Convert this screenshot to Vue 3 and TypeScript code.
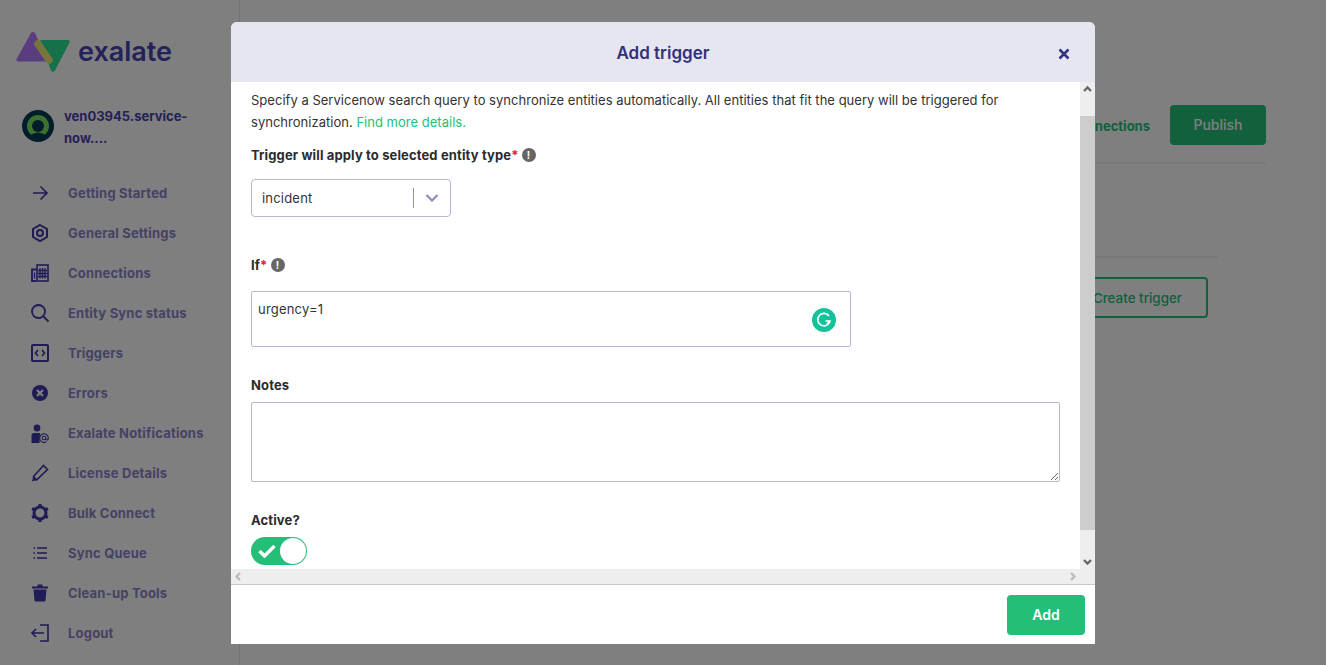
<script setup lang="ts">
interface NavItem { label: string; icon: string }
const nav: NavItem[] = [
  { label: 'Getting Started', icon: 'arrow' },
  { label: 'General Settings', icon: 'hex' },
  { label: 'Connections', icon: 'building' },
  { label: 'Entity Sync status', icon: 'search' },
  { label: 'Triggers', icon: 'code' },
  { label: 'Errors', icon: 'error' },
  { label: 'Exalate Notifications', icon: 'user' },
  { label: 'License Details', icon: 'pencil' },
  { label: 'Bulk Connect', icon: 'gear' },
  { label: 'Sync Queue', icon: 'list' },
  { label: 'Clean-up Tools', icon: 'trash' },
  { label: 'Logout', icon: 'logout' },
]
</script>

<template>
  <div class="page">
    <aside class="sidebar">
      <div class="brand">
        <svg width="56" height="42" viewBox="0 0 56 42">
          <path d="M15 2 Q17 0 19 2 L32 30.500 L2 30.500 Q-0.500 30 0.800 27.500 Z" fill="#b47aff" />
          <path d="M24 9 L52 9 Q54.500 9.500 53.500 11.500 L39 39.500 Q37 42 35 39.500 Z" fill="#28e294" />
          <line x1="22" y1="13" x2="33" y2="29" stroke="#f0ea78" stroke-width="7.500" stroke-linecap="round" />
        </svg>
        <span class="brand-name">exalate</span>
      </div>
      <div class="account">
        <svg class="avatar" width="32" height="32" viewBox="0 0 32 32">
          <circle cx="16" cy="16" r="16" fill="#053a55" />
          <circle cx="16" cy="16" r="11" fill="#7ce060" />
          <circle cx="16" cy="16" r="6" fill="#053a55" />
          <path d="M7 26 Q16 19 25 26 Q16 31 7 26 Z" fill="#053a55" />
        </svg>
        <span class="account-name">ven03945.service-now....</span>
      </div>
      <nav class="nav">
        <div v-for="item in nav" :key="item.label" class="nav-row">
          <span class="nav-icon">
            <svg width="20" height="20" viewBox="0 0 20 20" fill="none" stroke="#3e36aa" stroke-width="1.600">
              <path v-if="item.icon === 'arrow'" d="M3 10 H17 M10.500 3.500 L17 10 L10.500 16.500" />
              <g v-else-if="item.icon === 'hex'" stroke-width="2">
                <path d="M10 2 L17 6 V14 L10 18 L3 14 V6 Z" />
                <circle cx="10" cy="10" r="3" />
              </g>
              <g v-else-if="item.icon === 'building'">
                <rect x="7" y="2" width="11" height="16" />
                <path d="M6 6.500 H2 V18 H6" stroke-width="1.800" />
                <path d="M10 5 V15.500 M12.500 5 V15.500 M15 5 V15.500 M8 7.500 H17 M8 10.500 H17 M8 13.500 H17 M4.500 9.500 V15.500" stroke-width="1.300" />
              </g>
              <g v-else-if="item.icon === 'search'" stroke-width="1.800">
                <circle cx="8.500" cy="8.500" r="6.500" />
                <path d="M13.500 13.500 L18.500 18.500" />
              </g>
              <g v-else-if="item.icon === 'code'">
                <rect x="2" y="2" width="16" height="16" rx="1" stroke-width="2" />
                <path d="M8 7 L5.500 10 L8 13 M12 7 L14.500 10 L12 13" stroke-width="1.700" />
              </g>
              <g v-else-if="item.icon === 'error'">
                <circle cx="10" cy="10" r="8" fill="#3e36aa" stroke="none" />
                <path d="M7 7 L13 13 M13 7 L7 13" stroke="#fff" stroke-width="2.200" />
              </g>
              <g v-else-if="item.icon === 'user'">
                <circle cx="7" cy="5" r="3.400" fill="#3e36aa" stroke="none" />
                <path d="M1.500 20 V12.500 Q1.500 10 4 10 H10 L9.500 20 Z" fill="#3e36aa" stroke="none" />
                <path d="M15.800 15 V16 Q16 17.200 17.200 17 Q18.500 16.500 18.300 15 A4.300 4.300 0 1 0 16.500 18.600" stroke-width="1.100" />
                <circle cx="14" cy="15" r="1.800" stroke-width="1.100" />
              </g>
              <g v-else-if="item.icon === 'pencil'">
                <path d="M3.500 13.500 L13.500 2.500 L17.500 6.500 L6.500 17 Z" />
                <path d="M2 18.500 L3.200 13.500 L6.800 17 Z" fill="#3e36aa" stroke="none" />
              </g>
              <g v-else-if="item.icon === 'gear'">
                <circle cx="10" cy="10" r="6" stroke-width="3" />
                <path d="M10 1 V4 M10 16 V19 M2.200 5.500 L4.800 7 M15.200 13 L17.800 14.500 M2.200 14.500 L4.800 13 M15.200 7 L17.800 5.500" stroke-width="3.200" />
              </g>
              <g v-else-if="item.icon === 'list'">
                <path d="M7 5 H17 M7 10 H17 M7 15 H17 M3.500 5 H5 M3.500 10 H5 M3.500 15 H5" stroke-width="1.700" />
              </g>
              <g v-else-if="item.icon === 'trash'">
                <path d="M2 3.500 H18 V5.500 H2 Z M7.500 1.500 H12.500 V3.500 H7.500 Z" fill="#3e36aa" stroke="none" />
                <path d="M3.500 6.500 H16.500 L15.500 17.500 Q15.400 18.500 14 18.500 H6 Q4.600 18.500 4.500 17.500 Z" fill="#3e36aa" stroke="none" />
              </g>
              <g v-else-if="item.icon === 'logout'">
                <path d="M10 2 H18 V18 H10" />
                <path d="M14 10 H2 M6 6 L2 10 L6 14" />
              </g>
            </svg>
          </span>
          <span class="nav-label">{{ item.label }}</span>
        </div>
      </nav>
    </aside>

    <main class="main">
      <div class="topbar">
        <a class="link">Connections</a>
        <button class="publish" type="button">Publish</button>
      </div>
      <div class="rule"></div>
      <div class="triggers">
        <div class="rule-short"></div>
        <button class="create" type="button">Create trigger</button>
      </div>
    </main>

    <div class="overlay">
      <section class="modal">
        <header class="modal-head">
          <h2>Add trigger</h2>
          <svg class="close" width="12" height="12" viewBox="0 0 12 12" stroke="#33307e" stroke-width="2.600">
            <path d="M1.500 1.500 L10.500 10.500 M10.500 1.500 L1.500 10.500" />
          </svg>
        </header>

        <div class="modal-scroll">
          <div class="modal-body">
            <p class="intro">
              Specify a Servicenow search query to synchronize entities automatically. All entities that fit the query will be triggered for synchronization.
              <span class="green">Find more details.</span>
            </p>

            <div class="label entity-label">
              Trigger will apply to selected entity type<span class="req">*</span>
              <span class="info">!</span>
            </div>
            <div class="select">
              <span class="select-value">incident</span>
              <span class="select-sep"></span>
              <svg width="14" height="8" viewBox="0 0 14 8" fill="none" stroke="#8f8abf" stroke-width="2.200">
                <path d="M1.500 1 L7 6.500 L12.500 1" />
              </svg>
            </div>

            <div class="label if-label">
              If<span class="req">*</span>
              <span class="info">!</span>
            </div>
            <div class="query">
              <span>urgency=1</span>
              <span class="grammarly">
                <svg width="16" height="16" viewBox="0 0 16 16" fill="none" stroke="#fff" stroke-width="1.600">
                  <path d="M13 4 A6.200 6.200 0 1 0 14 9 H9.500 M14 9 L11 12" />
                </svg>
              </span>
            </div>

            <div class="label notes-label">Notes</div>
            <textarea class="notes"></textarea>

            <div class="label active-label">Active?</div>
            <div class="toggle">
              <svg width="18" height="14" viewBox="0 0 18 14" fill="none" stroke="#fff" stroke-width="3.400">
                <path d="M1.500 7 L6.500 12 L16.500 2" />
              </svg>
              <span class="knob"></span>
            </div>
          </div>

          <div class="vbar">
            <svg width="15" height="15" viewBox="0 0 15 15" fill="none" stroke="#666" stroke-width="2.300">
              <path d="M4 9 L7.500 5.500 L11 9" />
            </svg>
            <div class="vtrack"><div class="vthumb"></div></div>
            <svg width="15" height="15" viewBox="0 0 15 15" fill="none" stroke="#666" stroke-width="2.300">
              <path d="M4 6 L7.500 9.500 L11 6" />
            </svg>
          </div>

          <div class="hbar">
            <svg width="15" height="15" viewBox="0 0 15 15" fill="none" stroke="#bbb" stroke-width="2.300">
              <path d="M9 4 L5.500 7.500 L9 11" />
            </svg>
            <svg class="hbar-right" width="15" height="15" viewBox="0 0 15 15" fill="none" stroke="#bbb" stroke-width="2.300">
              <path d="M6 4 L9.500 7.500 L6 11" />
            </svg>
          </div>
        </div>

        <footer class="modal-foot">
          <button class="add" type="button">Add</button>
        </footer>
      </section>
    </div>
  </div>
</template>

<style>
html, body { margin: 0; background: #fff; overflow: hidden; }
</style>

<style scoped>
.page {
  position: relative;
  display: flex;
  width: 1326px;
  height: 665px;
  overflow: hidden;
  font-family: Inter, "Liberation Sans", sans-serif;
  font-size: 13px;
  color: #333;
  background: #fff;
}
.sidebar {
  box-sizing: border-box;
  width: 240px;
  flex: none;
  border-right: 1px solid #e6e6e6;
  padding: 31px 0 0 16px;
}
.brand { display: flex; align-items: center; gap: 6px; height: 42px; }
.brand-name { font-size: 27px; font-weight: 600; color: #4a42b4; line-height: 38px; }
.account {
  display: flex;
  align-items: flex-start;
  gap: 10px;
  margin: 31px 0 0 6px;
}
.avatar { flex: none; margin-top: 6px; }
.account-name {
  width: 136px;
  padding-top: 1px;
  font-size: 13px;
  line-height: 22px;
  font-weight: 700;
  color: #4a42b4;
  overflow-wrap: anywhere;
}
.nav { margin-top: 24px; }
.nav-row { display: flex; align-items: center; height: 40px; }
.nav-icon { display: flex; justify-content: center; width: 48px; }
.nav-label {
  margin-left: 4px;
  font-size: 13px;
  font-weight: 700;
  letter-spacing: 0.2px;
  color: #8a84cc;
  white-space: nowrap;
}
.main { flex: 1; box-sizing: border-box; padding: 105px 60px 0 0; }
.topbar { display: flex; justify-content: flex-end; align-items: center; gap: 20px; }
.link { padding-top: 2px; font-weight: 700; color: #26c07a; }
.publish {
  width: 96px;
  height: 40px;
  padding-bottom: 2px;
  border: 0;
  border-radius: 4px;
  background: #26c07a;
  color: #fff;
  font: 500 14px Inter, "Liberation Sans", sans-serif;
}
.rule { height: 2px; margin-top: 17px; background: #f0f0f0; }
.triggers { display: flex; flex-direction: column; align-items: flex-end; margin-top: 92px; }
.rule-short { align-self: stretch; height: 2px; margin-right: 48px; background: #f0f0f0; }
.create {
  width: 160px;
  height: 41px;
  margin: 19px 58px 0 0;
  border: 2px solid #26c07a;
  border-radius: 4px;
  background: #fff;
  color: #26c07a;
  text-align: right;
  padding-right: 24px;
  font: 500 13.4px Inter, "Liberation Sans", sans-serif;
}
.overlay {
  position: absolute;
  inset: 0;
  display: flex;
  justify-content: center;
  align-items: flex-start;
  padding-top: 22px;
  background: rgba(0, 0, 0, 0.5);
}
.modal {
  display: flex;
  flex-direction: column;
  width: 864px;
  height: 622px;
  background: #fff;
  border-radius: 6px 6px 0 0;
  overflow: hidden;
}
.modal-head {
  position: relative;
  display: flex;
  align-items: center;
  justify-content: center;
  height: 60px;
  flex: none;
  background: #e6e6f0;
}
.modal-head h2 { margin: 2px 0 0; font-size: 17px; font-weight: 600; color: #33307e; }
.close { position: absolute; right: 25px; top: 26px; }
.modal-scroll {
  display: grid;
  grid-template-columns: 1fr 15px;
  grid-template-rows: 487px 15px;
  height: 502px;
  flex: none;
}
.modal-body { padding: 7px 20px 0; overflow: hidden; }
.intro { margin: 0; line-height: 22px; width: 760px; letter-spacing: 0.02px; }
.green { color: #24be78; }
.label { font-weight: 700; line-height: 18px; letter-spacing: 0.13px; color: #2c2c2c; white-space: nowrap; }
.req { color: #e0203c; }
.info {
  display: inline-flex;
  align-items: center;
  justify-content: center;
  width: 14px;
  height: 14px;
  margin-left: 3px;
  border-radius: 50%;
  background: #666;
  color: #fff;
  font-size: 10px;
  font-weight: 700;
  vertical-align: 1px;
}
.entity-label { margin-top: 13px; }
.select {
  display: flex;
  align-items: center;
  box-sizing: border-box;
  width: 200px;
  height: 38px;
  margin-top: 15px;
  padding: 0 11px 0 10px;
  border: 1px solid #b9b5d6;
  border-radius: 4px;
  letter-spacing: 0.2px;
}
.select-value { flex: 1; }
.select-sep { width: 1px; height: 20px; margin-right: 11px; background: #8f8abf; }
.if-label { margin-top: 39px; }
.query {
  position: relative;
  box-sizing: border-box;
  width: 600px;
  height: 56px;
  margin-top: 17px;
  padding: 9px 6px;
  border: 1px solid #b9b5d6;
  border-radius: 2px;
  letter-spacing: 0.2px;
}
.grammarly {
  position: absolute;
  right: 14px;
  top: 16px;
  display: flex;
  align-items: center;
  justify-content: center;
  width: 24px;
  height: 24px;
  border-radius: 50%;
  background: #15c39a;
}
.notes-label { margin-top: 29px; }
.notes {
  display: block;
  box-sizing: border-box;
  width: 809px;
  height: 80px;
  margin-top: 8px;
  border: 1px solid #b9b5d6;
  border-radius: 2px;
  outline: none;
}
.active-label { margin-top: 29px; }
.toggle {
  position: relative;
  display: flex;
  align-items: center;
  box-sizing: border-box;
  width: 56px;
  height: 28px;
  margin-top: 8px;
  padding-left: 7px;
  border-radius: 14px;
  background: #24be78;
}
.knob {
  position: absolute;
  right: 1px;
  top: 1px;
  width: 26px;
  height: 26px;
  border-radius: 50%;
  background: #fff;
}
.vbar { display: flex; flex-direction: column; background: #eee; }
.vtrack { flex: 1; padding-top: 19px; box-sizing: border-box; height: 457px; }
.vthumb { height: 414px; background: #cdcdcd; }
.hbar {
  grid-column: 1 / 3;
  display: flex;
  justify-content: space-between;
  padding-right: 15px;
  background: #eee;
}
.hbar-right { margin-left: auto; }
.modal-foot {
  display: flex;
  justify-content: flex-end;
  align-items: center;
  box-sizing: border-box;
  height: 60px;
  flex: none;
  padding-right: 10px;
  border-top: 1px solid #c8c8c8;
}
.add {
  width: 78px;
  height: 40px;
  border: 0;
  border-radius: 4px;
  background: #24be78;
  color: #fff;
  font: 600 14px Inter, "Liberation Sans", sans-serif;
}
</style>
